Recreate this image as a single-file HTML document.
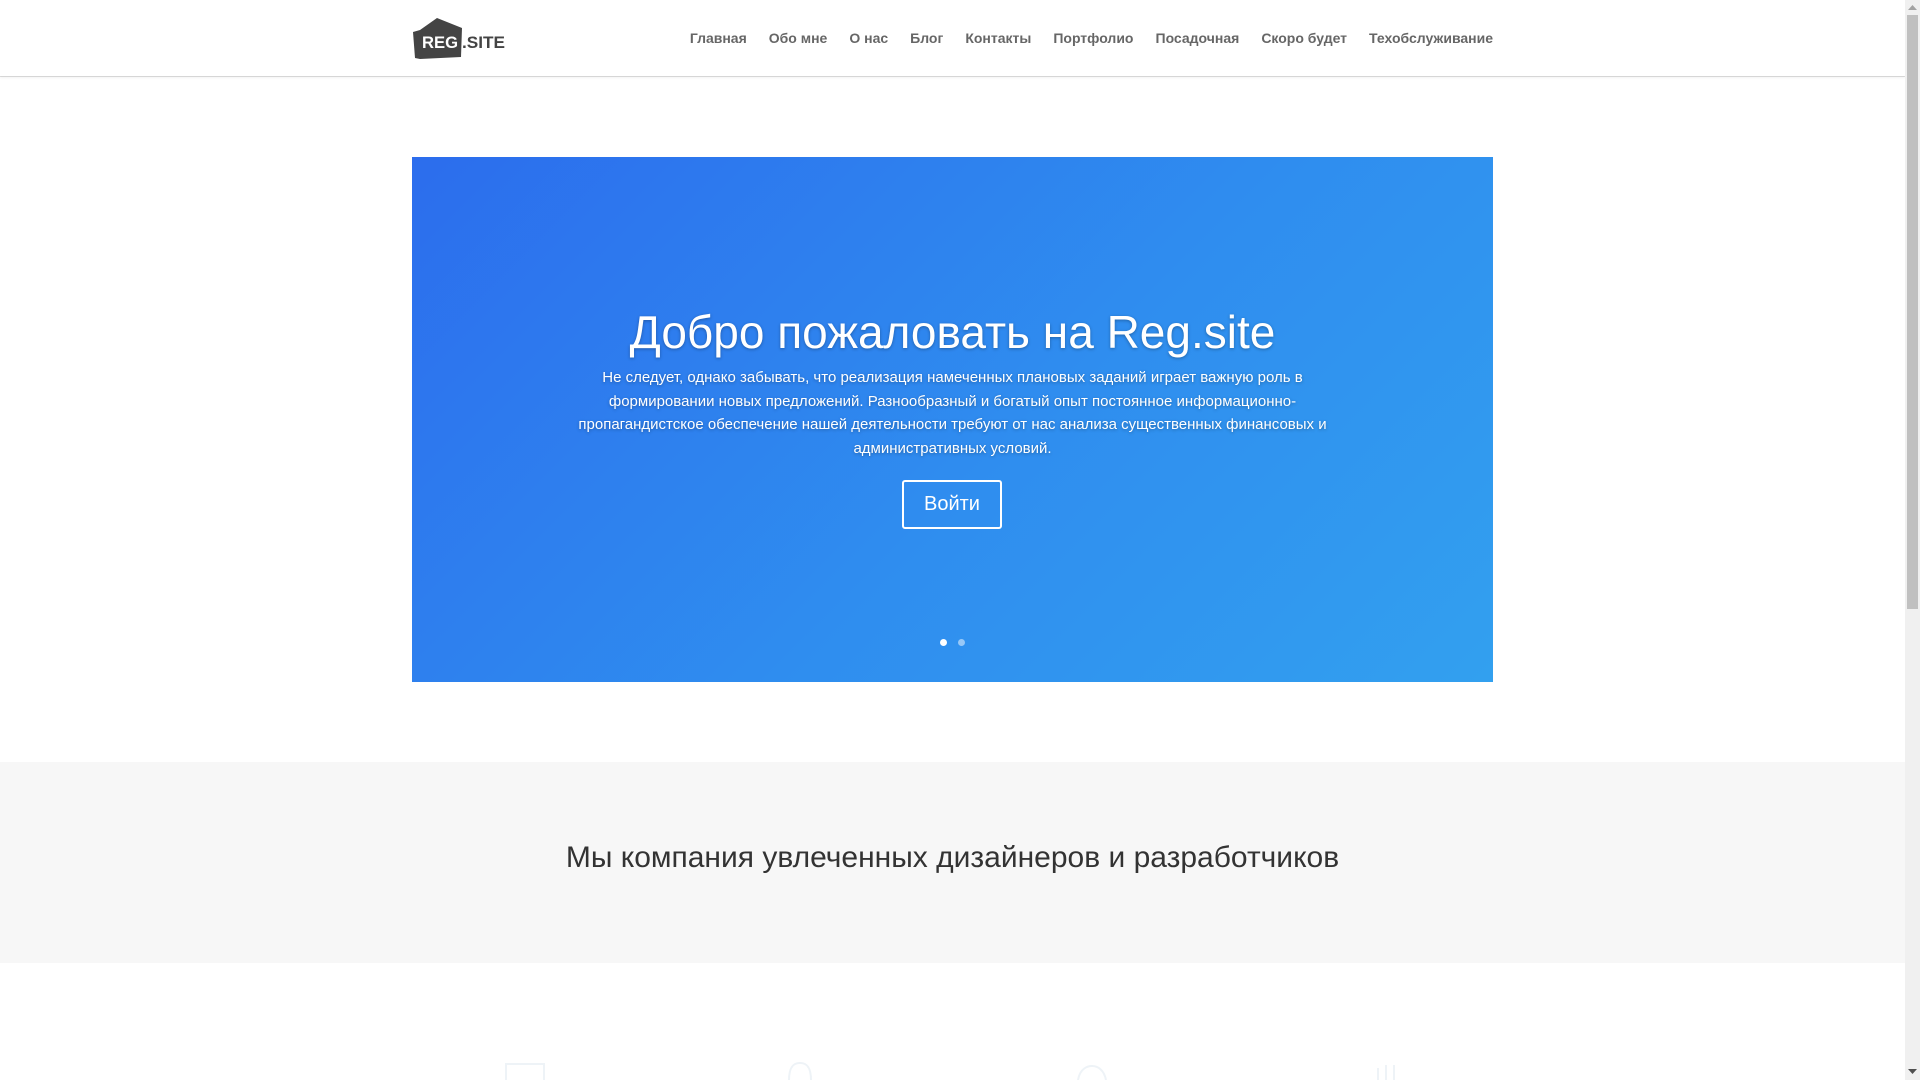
<!DOCTYPE html>
<html><head><meta charset="utf-8">
<style>
*{margin:0;padding:0;box-sizing:border-box}
html,body{width:1920px;height:1080px;overflow:hidden;background:#fff;font-family:"Liberation Sans",Arial,sans-serif}
#page{position:absolute;left:0;top:0;width:1905px;height:1080px;background:#fff}
header{position:absolute;left:0;top:0;width:1905px;height:76px;background:#fff;box-shadow:0 1px 0 rgba(0,0,0,.12),0 2px 2px rgba(0,0,0,.05)}
.logo{position:absolute;left:412px;top:18px}
nav{position:absolute;right:412px;top:30px;display:flex;gap:22px;font-size:14px;font-weight:bold;color:#666;white-space:nowrap}
.slider{position:absolute;left:412px;top:157px;width:1081px;height:525px;background:linear-gradient(135deg,#2c6ded 0%,#2f8def 55%,#32a0ef 100%)}
.slider h1{position:absolute;left:0;right:0;top:147px;text-align:center;font-weight:normal;font-size:46px;color:#fff;text-shadow:0 1px 3px rgba(0,0,0,.3);line-height:56px}
.slider p{position:absolute;left:160px;right:160px;top:209px;text-align:center;color:#fff;font-size:15px;line-height:23.7px;text-shadow:0 1px 3px rgba(0,0,0,.3)}
.btn{position:absolute;left:490px;top:323px;width:100px;height:49px;border:2px solid #fff;border-radius:3px;color:#fff;font-size:20px;text-align:center;line-height:45px}
.dot{position:absolute;top:482px;width:7px;height:7px;border-radius:50%;background:#fff}
.gray{position:absolute;left:0;top:762px;width:1905px;height:201px;background:#f7f7f7}
.gray h2{position:absolute;left:0;right:0;top:79px;text-align:center;font-weight:normal;font-size:30px;color:#333}
.sb{position:absolute;left:1905px;top:0;width:15px;height:1080px;background:#f0f0f0}
.thumb{position:absolute;left:2px;top:15px;width:11px;height:594px;background:#c0c0c0}
</style></head><body>
<div id="page">
<header>
 <svg class="logo" width="96" height="44" viewBox="0 0 96 44">
  <path d="M1 14 L8 12 L8 41 L3 40 Z" fill="#444"/>
  <path d="M8 12 L25 0 L50 10 L49 39 L8 41 Z" fill="#444"/>
  <text x="10" y="30" font-family="Liberation Sans,Arial,sans-serif" font-weight="bold" font-size="17" fill="#fff" textLength="36" lengthAdjust="spacingAndGlyphs">REG</text>
  <text x="50" y="30" font-family="Liberation Sans,Arial,sans-serif" font-weight="bold" font-size="17" fill="#444" textLength="43" lengthAdjust="spacingAndGlyphs">.SITE</text>
 </svg>
 <nav><span>Главная</span><span>Обо мне</span><span>О нас</span><span>Блог</span><span>Контакты</span><span>Портфолио</span><span>Посадочная</span><span>Скоро будет</span><span>Техобслуживание</span></nav>
</header>
<div class="slider">
 <h1>Добро пожаловать на Reg.site</h1>
 <p>Не следует, однако забывать, что реализация намеченных плановых заданий играет важную роль в формировании новых предложений. Разнообразный и богатый опыт постоянное информационно-пропагандистское обеспечение нашей деятельности требуют от нас анализа существенных финансовых и административных условий.</p>
 <div class="btn">Войти</div>
 <div class="dot" style="left:528px"></div>
 <div class="dot" style="left:546px;opacity:.5"></div>
</div>
<div class="gray"><h2>Мы компания увлеченных дизайнеров и разработчиков</h2></div>
<svg style="position:absolute;left:0;top:1060px" width="1905" height="20">
 <g fill="none" stroke="#eef3f7" stroke-width="2">
  <rect x="506" y="4" width="38" height="30"/>
  <path d="M789 20 C789 5 795 3 800 3 C805 3 811 5 811 20"/>
  <path d="M1078 20 C1080 8 1088 6 1092 6 C1098 6 1104 10 1106 20"/>
  <path d="M1378 8 V20 M1386 5 V20 M1394 5 V20"/>
 </g>
</svg>
</div>
<div class="sb"><div class="thumb"></div>
 <svg style="position:absolute;left:3px;top:5px" width="9" height="6"><path d="M0 5 L4.5 0 L9 5Z" fill="#a3a3a3"/></svg>
 <svg style="position:absolute;left:3px;top:1069px" width="9" height="6"><path d="M0 0 L9 0 L4.5 5Z" fill="#505050"/></svg>
</div>
</body></html>
